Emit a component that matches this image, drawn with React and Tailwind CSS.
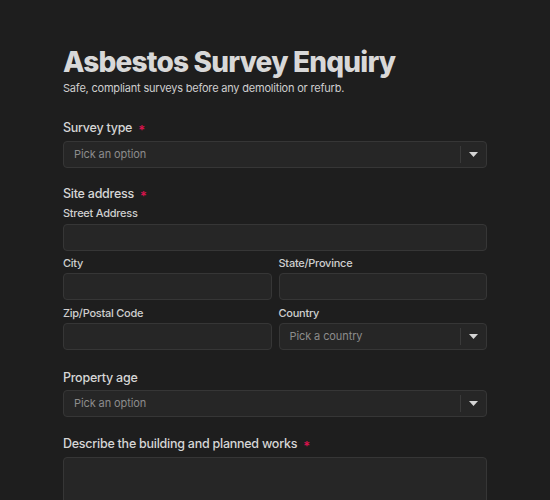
import React from 'react';

const font = { fontFamily: 'Inter, "Noto Sans", sans-serif' };

const Star = () => (
  <span className="ml-[6px] text-[13px] leading-none font-semibold text-[#d9134d] relative top-[2px]">*</span>
);

const Label = ({ children, required }) => (
  <div className="flex items-center text-[12.5px] leading-[18px] font-medium tracking-[-0.25px] text-[#d6d6d6]">
    {children}
    {required && <Star />}
  </div>
);

const SubLabel = ({ children }) => (
  <div className="text-[11px] leading-[14px] font-medium tracking-[-0.25px] text-[#cfcfcf]">{children}</div>
);

const Input = ({ className = '' }) => (
  <div className={`h-[27px] rounded-[4px] border border-[#363636] bg-[#262626] ${className}`} />
);

const Select = ({ placeholder }) => (
  <div className="h-[27px] rounded-[4px] border border-[#363636] bg-[#262626] flex items-center">
    <span className="flex-1 pl-[10px] text-[11px] tracking-[-0.1px] text-[#8c8c8c]">{placeholder}</span>
    <div className="w-px h-[17px] bg-[#3a3a3a]" />
    <div className="w-[25px] flex justify-center">
      <svg width="9" height="5" viewBox="0 0 9 5">
        <path d="M0 0h9L4.5 5z" fill="#d4d4d4" />
      </svg>
    </div>
  </div>
);

export default function App() {
  return (
    <div className="min-h-screen bg-[#1e1e1e]" style={font}>
      <div className="w-[424px] mx-auto pt-[45px]">
        <h1 className="text-[28px] leading-[34px] font-extrabold text-[#d8d8d8] tracking-[-0.8px]">
          Asbestos Survey Enquiry
        </h1>
        <p className="mt-px text-[11px] leading-[16px] tracking-[-0.2px] text-[#cfcfcf]">
          Safe, compliant surveys before any demolition or refurb.
        </p>

        <div className="mt-[23px]">
          <Label required>Survey type</Label>
          <div className="mt-[4px]">
            <Select placeholder="Pick an option" />
          </div>
        </div>

        <div className="mt-[17px]">
          <Label required>Site address</Label>
          <div className="mt-[3px]">
            <SubLabel>Street Address</SubLabel>
            <Input className="mt-[4px]" />
          </div>
          <div className="grid grid-cols-2 gap-x-[7px] mt-[5px]">
            <div>
              <SubLabel>City</SubLabel>
              <Input className="mt-[3px]" />
            </div>
            <div>
              <SubLabel>State/Province</SubLabel>
              <Input className="mt-[3px]" />
            </div>
          </div>
          <div className="grid grid-cols-2 gap-x-[7px] mt-[6px]">
            <div>
              <SubLabel>Zip/Postal Code</SubLabel>
              <Input className="mt-[3px]" />
            </div>
            <div>
              <SubLabel>Country</SubLabel>
              <div className="mt-[3px]">
                <Select placeholder="Pick a country" />
              </div>
            </div>
          </div>
        </div>

        <div className="mt-[19px]">
          <Label>Property age</Label>
          <div className="mt-[3px]">
            <Select placeholder="Pick an option" />
          </div>
        </div>

        <div className="mt-[18px]">
          <Label required>Describe the building and planned works</Label>
          <div className="mt-[4px] h-[90px] rounded-[4px] border border-[#363636] bg-[#262626]" />
        </div>
      </div>
    </div>
  );
}
